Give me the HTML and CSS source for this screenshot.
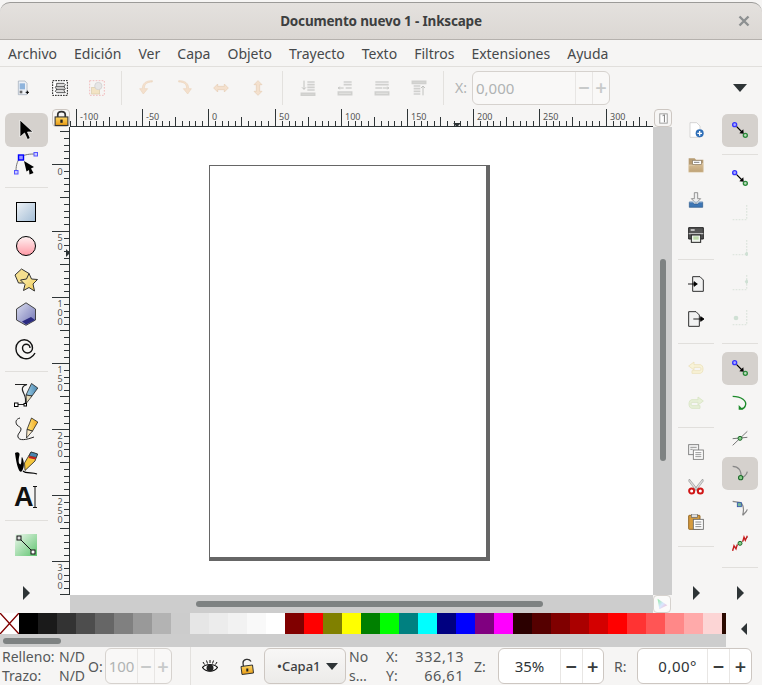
FILE: index.html
```html
<!DOCTYPE html>
<html lang="es">
<head>
    <meta charset="UTF-8">
    <title>Documento nuevo 1 - Inkscape</title>
    <link rel="stylesheet" href="styles.css">
</head>
<body>
<svg class="sprite" width="0" height="0">
    <defs>
        <linearGradient id="gRect" x1="0" y1="0" x2="1" y2="1"><stop offset="0" stop-color="#eef2f6"/><stop offset="1" stop-color="#a3bdd6"/></linearGradient>
        <linearGradient id="gCircle" x1="0" y1="0" x2="0" y2="1"><stop offset="0" stop-color="#fff2f2"/><stop offset="1" stop-color="#ff9aa6"/></linearGradient>
        <linearGradient id="gStar" x1="0" y1="0" x2="1" y2="1"><stop offset="0" stop-color="#fdf3bd"/><stop offset="1" stop-color="#efc94f"/></linearGradient>
        <linearGradient id="gBox" x1="0" y1="0" x2="1" y2="1"><stop offset="0" stop-color="#dcdff0"/><stop offset="1" stop-color="#6f72b4"/></linearGradient>
        <linearGradient id="gNode" x1="0" y1="0" x2="1" y2="1"><stop offset="0" stop-color="#eef7ee"/><stop offset="1" stop-color="#5fc46f"/></linearGradient>
        <linearGradient id="gNib" x1="0" y1="0" x2="1" y2="0"><stop offset="0" stop-color="#9fd0e8"/><stop offset="1" stop-color="#4a86b0"/></linearGradient>
        <linearGradient id="gPencil" x1="0" y1="0" x2="1" y2="0"><stop offset="0" stop-color="#ffe680"/><stop offset="1" stop-color="#f2a71b"/></linearGradient>
        <linearGradient id="gFolder" x1="0" y1="0" x2="0" y2="1"><stop offset="0" stop-color="#d6bd95"/><stop offset="1" stop-color="#bfa275"/></linearGradient>
        <linearGradient id="gLock" x1="0" y1="0" x2="0" y2="1"><stop offset="0" stop-color="#fdd663"/><stop offset="1" stop-color="#e89a12"/></linearGradient>
        <linearGradient id="gWheel" x1="0" y1="0" x2="1" y2="1"><stop offset="0" stop-color="#8fe8a0"/><stop offset=".5" stop-color="#d8e8ff"/><stop offset="1" stop-color="#f8b0c8"/></linearGradient>

        <symbol id="i-select" viewBox="0 0 24 24"><path d="M6 2V19L10.500 15 13.500 21.500 16.200 20.300 13.500 14H19Z" fill="#000" stroke="#fff" stroke-width=".7"/></symbol>
        <symbol id="i-node" viewBox="0 0 24 24">
            <path d="M2 19C2 12 4 8 6.500 5.500 9 3 14 2 20 2" fill="none" stroke="#777" stroke-width="1"/>
            <rect x="4.500" y="3" width="5" height="5" fill="#99f" stroke="#00f" stroke-width="1.400"/>
            <rect x="20" y=".5" width="3.500" height="3.500" fill="#ccf" stroke="#55f"/>
            <rect x=".5" y="18.500" width="3.500" height="3.500" fill="#ccf" stroke="#55f"/>
            <path d="M10 9 20 15 17 16.500 19.500 21 15.500 22.500 15 18 12.500 19.500Z" fill="#000"/>
        </symbol>
        <symbol id="i-rect" viewBox="0 0 24 24"><rect x="2.500" y="2.500" width="19" height="19" fill="url(#gRect)" stroke="#000" stroke-width="1"/></symbol>
        <symbol id="i-circle" viewBox="0 0 24 24"><circle cx="12" cy="12" r="9.500" fill="url(#gCircle)" stroke="#000" stroke-width="1"/></symbol>
        <symbol id="i-star" viewBox="0 0 24 24">
            <path d="M7.500 1 15 5.500 13 15H4.500L1 7Z" fill="#f5df8e" stroke="#333" stroke-width="1"/>
            <path d="M15 5.500 17.500 11 23.500 11.500 19 16 20.500 23 15 19.500 9.500 22.500 11 16.500 6.500 12 12.500 11Z" fill="url(#gStar)" stroke="#333" stroke-width="1"/>
        </symbol>
        <symbol id="i-box" viewBox="0 0 24 24">
            <path d="M12 .8 21.500 7V18L12 23.300 2.500 18V7Z" fill="url(#gBox)" stroke="#444" stroke-width="1"/>
            <path d="M21 18 12 22.500 8 19.500 17 15Z" fill="#2b2b80"/>
        </symbol>
        <symbol id="i-spiral" viewBox="0 0 24 24"><path d="M16 12A3.750 3.750 0 0 0 8.500 12 5 5 0 0 0 18.500 12 8.250 8.250 0 0 0 2 12 10 10 0 0 0 21 17" fill="none" stroke="#111" stroke-width="1.400"/></symbol>
        <symbol id="i-pen" viewBox="0 0 24 24">
            <path d="M1 1.500H13C8 3 7 6 10 11 12 15 12 18 11 21.500H3" fill="none" stroke="#222" stroke-width="1.100"/>
            <rect x=".5" y="20" width="3.500" height="3.500" fill="#fff" stroke="#000"/>
            <rect x="10" y="20.500" width="2.500" height="2.500" fill="#fff" stroke="#000"/>
            <path d="M17.500 .5 23.800 5 18 13 12 12Z" fill="url(#gNib)" stroke="#222" stroke-width=".8"/>
            <path d="M12 12 18 13 12.500 20Z" fill="#e8dcb8" stroke="#222" stroke-width=".8"/>
        </symbol>
        <symbol id="i-pencil" viewBox="0 0 24 24">
            <path d="M6 1C2 2 1 5 3 8 5 10 7 10 7 12 7 15 3 17 4 20 5 24 12 23 20 20" fill="none" stroke="#222" stroke-width="1"/>
            <path d="M17.500 1 23.800 5 18.500 14 13 12.500Z" fill="url(#gPencil)" stroke="#222" stroke-width=".8"/>
            <path d="M13 12.500 18.500 14 12.500 21Z" fill="#f8e8c8" stroke="#222" stroke-width=".8"/>
        </symbol>
        <symbol id="i-calli" viewBox="0 0 24 24">
            <path d="M1 2C3 .5 6 1 5.500 4 4.500 8 4 13 6.500 13.500 8 12 7 7 8 6 10 9 11 16 8 20 6 23 3 18 1 2Z" fill="#000"/>
            <path d="M9 20C12 23 18 21 23 23" fill="none" stroke="#000" stroke-width="1.200"/>
            <path d="M17 1 23.500 3 21 10 11 19.500 10.500 12Z" fill="#f5c63c" stroke="#222" stroke-width=".8"/>
            <path d="M17 1 23.500 3 22.300 6.500 15 5Z" fill="#4a86b0" stroke="#222" stroke-width=".6"/>
            <path d="M15.500 5 22.300 6.500 21.500 8.500 14.500 7Z" fill="#c02020"/>
        </symbol>
        <symbol id="i-gradient" viewBox="0 0 24 24">
            <rect x="1" y="1" width="22" height="22" fill="url(#gNode)"/>
            <path d="M5 5 19 19" stroke="#111" stroke-width="1"/>
            <rect x="3" y="3" width="4" height="4" fill="#ddd" stroke="#111"/>
            <rect x="17" y="17" width="4" height="4" fill="#fff" stroke="#111"/>
        </symbol>

        <symbol id="c-doc" viewBox="0 0 24 24">
            <path d="M5 1.500H15L18 5V22H5Z" fill="#eef1f6" stroke="#9aa6b4"/>
            <rect x="7" y="5" width="8" height="9" fill="#8fb4dc"/>
            <rect x="7" y="16" width="4" height="4" fill="#666"/>
            <path d="M16 18.500h5M18.500 16v5" stroke="#000" stroke-width="1.500"/>
        </symbol>
        <symbol id="c-layers" viewBox="0 0 24 24">
            <rect x="1" y="1" width="22" height="22" fill="#fff" stroke="#000" stroke-width="1.400" stroke-dasharray="2.500 1.500"/>
            <path d="M7 5H18L20 7 18 10 20 13 18 16 20 19H7L5 17 7 14 5 11 7 8Z" fill="#ddd" stroke="#333" stroke-width="1.200"/>
            <path d="M6 10H19M6 14H19" stroke="#333" stroke-width="1.200"/>
        </symbol>
        <symbol id="c-deselect" viewBox="0 0 24 24">
            <rect x="1" y="1" width="22" height="22" fill="none" stroke="#f1b9b9" stroke-width="1.400" stroke-dasharray="2.500 2"/>
            <rect x="4" y="11" width="12" height="10" fill="#f3e4c4" stroke="#d9c9a8"/>
            <circle cx="14" cy="9" r="5.500" fill="#e6e6e6" stroke="#ccc"/>
        </symbol>
        <symbol id="c-rotl" viewBox="0 0 24 24"><path d="M20 3C12 3 8 6 8 13H13L6.500 21 1 13H5C5 5 10 1 20 1Z" fill="#f4e0cd" stroke="#ecd4bd"/></symbol>
        <symbol id="c-rotr" viewBox="0 0 24 24"><path d="M4 3C12 3 16 6 16 13H11L17.500 21 23 13H19C19 5 14 1 4 1Z" fill="#f4e0cd" stroke="#ecd4bd"/></symbol>
        <symbol id="c-fliph" viewBox="0 0 24 24"><path d="M1 12 7 6V9.500H17V6L23 12 17 18V14.500H7V18Z" fill="#f4e0cd" stroke="#e6cdb4"/></symbol>
        <symbol id="c-flipv" viewBox="0 0 24 24"><path d="M12 1 18 7H14.500V17H18L12 23 6 17H9.500V7H6Z" fill="#f4e0cd" stroke="#e6cdb4"/></symbol>
        <symbol id="c-a1" viewBox="0 0 24 24"><path d="M2 20H22V23H2ZM11 3H22M11 7H22M11 11H22M11 15H22" fill="#e4e4e2" stroke="#d0d0ce" stroke-width="2.400"/><path d="M6 1V14M3 11 6 14 9 11" fill="none" stroke="#bdbdbb" stroke-width="1.400"/></symbol>
        <symbol id="c-a2" viewBox="0 0 24 24"><path d="M2 18H22V22H2ZM10 3H22M10 7H22M13 12H22" fill="#e4e4e2" stroke="#d0d0ce" stroke-width="2.400"/><path d="M2 12H10M4 10 2 12 4 14" fill="none" stroke="#bdbdbb" stroke-width="1.400"/></symbol>
        <symbol id="c-a3" viewBox="0 0 24 24"><path d="M2 18H22V22H2ZM2 3H22M2 7H22M2 12H12" fill="#e4e4e2" stroke="#d0d0ce" stroke-width="2.400"/><path d="M13 12H22M20 10 22 12 20 14" fill="none" stroke="#bdbdbb" stroke-width="1.400"/></symbol>
        <symbol id="c-a4" viewBox="0 0 24 24"><path d="M2 2H22V5H2ZM4 9H14M4 13H14M4 17H14M4 21H14" fill="#e4e4e2" stroke="#d0d0ce" stroke-width="2.400"/><path d="M18 23V9M15 12 18 9 21 12" fill="none" stroke="#bdbdbb" stroke-width="1.400"/></symbol>
        <symbol id="i-caret-d" viewBox="0 0 14 8"><path d="M0 0H14L7 8Z"/></symbol>

        <symbol id="r-new" viewBox="0 0 24 24">
            <path d="M3 1H13L18 6V23H3Z" fill="#fff" stroke="#c4c4c4"/>
            <circle cx="17.500" cy="17" r="6" fill="#2f6fb8"/>
            <path d="M17.500 13.500V20.500M14 17H21" stroke="#fff" stroke-width="2"/>
        </symbol>
        <symbol id="r-open" viewBox="0 0 24 24">
            <path d="M1 2H10L12 4H23V22H1Z" fill="#b79c73"/>
            <path d="M1 12H10L11 10H23V23H1Z" fill="url(#gFolder)" stroke="#f0e2cc" stroke-width=".8"/>
            <rect x="7" y="5" width="13" height="6" fill="#fff" stroke="#8a7a60" stroke-width="1"/>
            <path d="M9 8H17" stroke="#777" stroke-width="1.400"/>
        </symbol>
        <symbol id="r-save" viewBox="0 0 24 24">
            <path d="M9.500 1H14.500V10H19L12 17 5 10H9.500Z" fill="#eee" stroke="#888" stroke-width="1.300"/>
            <path d="M2 15H7L9 18H15L17 15H22V23H2Z" fill="#3e76b4" stroke="#2a5688"/>
            <path d="M2 15H22" stroke="#a8c4e0" stroke-width="1.400"/>
        </symbol>
        <symbol id="r-print" viewBox="0 0 24 24">
            <path d="M1 1H23V18H1Z" fill="#555" stroke="#222" stroke-width="1.500"/>
            <rect x="4" y="3" width="6" height="3" fill="#bbb"/>
            <path d="M1 10H23" stroke="#ccc" stroke-width="1.600"/>
            <rect x="5" y="12" width="14" height="11" fill="#f0f4ee" stroke="#222" stroke-width="1.500"/>
            <rect x="8" y="14" width="8" height="5" fill="#bcd8a8"/>
        </symbol>
        <symbol id="r-import" viewBox="0 0 24 24">
            <path d="M7 1H18L23 6V23H7Z" fill="#f2f2f2" stroke="#111" stroke-width="1.300"/>
            <path d="M0 12H12M9 8.500 14 12 9 15.500Z" fill="#000" stroke="#000" stroke-width="1.300"/>
        </symbol>
        <symbol id="r-export" viewBox="0 0 24 24">
            <path d="M1 1H12L17 6V23H1Z" fill="#f2f2f2" stroke="#111" stroke-width="1.300"/>
            <path d="M8 12H20M19 8.500 24 12 19 15.500Z" fill="#000" stroke="#000" stroke-width="1.300"/>
        </symbol>
        <symbol id="r-undo" viewBox="0 0 24 24"><path d="M9 3 1 9 9 15V11H18C20 11 20 16 18 16H6V20H18C24 20 24 7 18 7H9Z" fill="#f8f3d8" stroke="#ece2bc" stroke-width="1.300"/></symbol>
        <symbol id="r-redo" viewBox="0 0 24 24"><path d="M15 3 23 9 15 15V11H6C4 11 4 16 6 16H18V20H6C0 20 0 7 6 7H15Z" fill="#e8f0d8" stroke="#d8e4c4" stroke-width="1.300"/></symbol>
        <symbol id="r-copy" viewBox="0 0 24 24">
            <rect x="1" y="1" width="15" height="15" fill="#f4f4f4" stroke="#777" stroke-width="1.300"/>
            <rect x="8" y="9" width="15" height="14" fill="#fff" stroke="#777" stroke-width="1.300"/>
            <path d="M3.500 5H13M3.500 8H7M11 13H20M11 16H20M11 19H20" stroke="#888" stroke-width="1.300"/>
        </symbol>
        <symbol id="r-cut" viewBox="0 0 24 24">
            <path d="M2 0 14 15 11.500 17 1 3ZM22 0 10 15 12.500 17 23 3Z" fill="#ddd" stroke="#888" stroke-width=".9"/>
            <circle cx="5.500" cy="18" r="3.800" fill="#fff" stroke="#d01616" stroke-width="3"/>
            <circle cx="18.500" cy="18" r="3.800" fill="#fff" stroke="#d01616" stroke-width="3"/>
        </symbol>
        <symbol id="r-paste" viewBox="0 0 24 24">
            <rect x="1" y="2" width="17" height="21" rx="1" fill="#d69b3e" stroke="#8a5a14" stroke-width="1.300"/>
            <rect x="5" y="0" width="9" height="5" fill="#ddd" stroke="#666"/>
            <rect x="8" y="8" width="15" height="15" fill="#fff" stroke="#666" stroke-width="1.300"/>
            <path d="M11 12H20M11 15.500H20M11 19H20" stroke="#777" stroke-width="1.300"/>
        </symbol>

        <symbol id="s-snap" viewBox="0 0 24 24">
            <circle cx="4" cy="4" r="3" fill="#aaf" stroke="#33f" stroke-width="2"/>
            <circle cx="20" cy="20" r="3" fill="#bdb" stroke="#2a8a3a" stroke-width="2"/>
            <path d="M7 7 15 15" stroke="#000" stroke-width="1.800"/>
            <path d="M11 17 17.500 17.500 17 11Z" fill="#000"/>
        </symbol>
        <symbol id="s-bbox" viewBox="0 0 24 24"><path d="M22 0V22H0" fill="none" stroke="#dfe6df" stroke-width="2" stroke-dasharray="2.500 2"/></symbol>
        <symbol id="s-bbox2" viewBox="0 0 24 24"><path d="M22 0V22H0" fill="none" stroke="#dfe6df" stroke-width="2" stroke-dasharray="2.500 2"/><path d="M22 17 25 21 22 25 19 21Z" fill="#cfe0d4"/></symbol>
        <symbol id="s-bbox3" viewBox="0 0 24 24"><path d="M22 0V22H0" fill="none" stroke="#dfe6df" stroke-width="2" stroke-dasharray="2.500 2"/><path d="M22 6 25 10 22 14 19 10Z" fill="#cfe0d4"/></symbol>
        <symbol id="s-bbox4" viewBox="0 0 24 24"><path d="M22 0V22H0" fill="none" stroke="#dfe6df" stroke-width="2" stroke-dasharray="2.500 2"/><circle cx="6" cy="12" r="3.500" fill="#cfe0d4"/></symbol>
        <symbol id="s-path" viewBox="0 0 24 24"><path d="M1 2C14 2 23 9 20 16 19 19 16 21 12 20" fill="none" stroke="#1c8a2a" stroke-width="2"/><path d="M10 15V22H17Z" fill="#1c8a2a"/></symbol>
        <symbol id="s-cross" viewBox="0 0 24 24"><path d="M1 23 23 2M1 13 23 11" fill="none" stroke="#777" stroke-width="1.500"/><circle cx="12" cy="12.500" r="3" fill="#8c8" stroke="#1c6a2a" stroke-width="1.500"/></symbol>
        <symbol id="s-node" viewBox="0 0 24 24"><path d="M1 2C10 2 14 7 14 19M14 19C17 19 22 15 23 10" fill="none" stroke="#888" stroke-width="1.800"/><circle cx="13" cy="19" r="3.200" fill="#8c8" stroke="#1c6a2a" stroke-width="1.600"/></symbol>
        <symbol id="s-smooth" viewBox="0 0 24 24"><path d="M1 2 13 4C18 8 18 15 16 23M16 23C18 21 22 18 23 14" fill="none" stroke="#888" stroke-width="1.800"/><rect x="8" y="4" width="6" height="6" fill="#7b9" stroke="#35a" stroke-width="1.300"/></symbol>
        <symbol id="s-mid" viewBox="0 0 24 24">
            <path d="M0 22 24 3" stroke="#888" stroke-width="1.200"/>
            <path d="M1 24 3 16 6 21 8 14M16 10 18 3 20 8 23 1" fill="none" stroke="#c81818" stroke-width="1.900"/>
            <circle cx="12" cy="12.500" r="3" fill="#8c8" stroke="#1c6a2a" stroke-width="1.500"/>
        </symbol>
    </defs>
</svg>

<div class="window">
    <header class="titlebar">
        <span class="title">Documento nuevo 1 - Inkscape</span>
        <svg class="close" viewBox="0 0 12 12"><path d="M1.500 1.500 10.500 10.500M10.500 1.500 1.500 10.500"/></svg>
    </header>
    <nav class="menubar">
        <span>Archivo</span><span>Edición</span><span>Ver</span><span>Capa</span><span>Objeto</span><span>Trayecto</span><span>Texto</span><span>Filtros</span><span>Extensiones</span><span>Ayuda</span>
    </nav>
    <div class="commandbar">
        <span class="cmd"><svg class="icon"><use href="#c-doc"/></svg></span>
        <span class="cmd"><svg class="icon"><use href="#c-layers"/></svg></span>
        <span class="cmd"><svg class="icon"><use href="#c-deselect"/></svg></span>
        <i class="vsep"></i>
        <span class="cmd"><svg class="icon"><use href="#c-rotl"/></svg></span>
        <span class="cmd"><svg class="icon"><use href="#c-rotr"/></svg></span>
        <span class="cmd"><svg class="icon"><use href="#c-fliph"/></svg></span>
        <span class="cmd"><svg class="icon"><use href="#c-flipv"/></svg></span>
        <i class="vsep"></i>
        <span class="cmd"><svg class="icon"><use href="#c-a1"/></svg></span>
        <span class="cmd"><svg class="icon"><use href="#c-a2"/></svg></span>
        <span class="cmd"><svg class="icon"><use href="#c-a3"/></svg></span>
        <span class="cmd"><svg class="icon"><use href="#c-a4"/></svg></span>
        <i class="vsep"></i>
        <span class="cmd-label">X:</span>
        <div class="spin spin-x disabled"><span class="spin-val left">0,000</span><b>−</b><b>+</b></div>
        <svg class="more"><use href="#i-caret-d"/></svg>
    </div>

    <main class="workspace">
        <aside class="toolbox">
            <span class="tool active"><svg class="icon"><use href="#i-select"/></svg></span>
            <span class="tool"><svg class="icon"><use href="#i-node"/></svg></span>
            <i class="sep"></i>
            <span class="tool"><svg class="icon"><use href="#i-rect"/></svg></span>
            <span class="tool"><svg class="icon"><use href="#i-circle"/></svg></span>
            <span class="tool"><svg class="icon"><use href="#i-star"/></svg></span>
            <span class="tool"><svg class="icon"><use href="#i-box"/></svg></span>
            <span class="tool"><svg class="icon"><use href="#i-spiral"/></svg></span>
            <i class="sep"></i>
            <span class="tool"><svg class="icon"><use href="#i-pen"/></svg></span>
            <span class="tool"><svg class="icon"><use href="#i-pencil"/></svg></span>
            <span class="tool"><svg class="icon"><use href="#i-calli"/></svg></span>
            <span class="tool"><svg class="icon text-icon" viewBox="0 0 24 24"><text x="0" y="21" class="glyph-a">A</text><path d="M19 1.500H23M21 1.500V22.500M19 22.500H23" fill="none" stroke="#111"/></svg></span>
            <i class="sep"></i>
            <span class="tool"><svg class="icon"><use href="#i-gradient"/></svg></span>
            <span class="overflow"></span>
        </aside>

        <div class="canvas-area">
            <div class="ruler-row">
                <span class="corner-btn"><svg viewBox="0 0 14 15" class="lock"><path d="M3.500 7V4.500C3.500 .5 10.500 .5 10.500 4.500V7" fill="none" stroke="#333" stroke-width="1.600"/><rect x="1" y="6.500" width="12" height="8" fill="url(#gLock)" stroke="#333"/><path d="M7 9v3" stroke="#222" stroke-width="2.200"/></svg></span>
                <svg class="hruler" viewBox="0 0 583 19">
                    <defs>
                        <g id="htick"><path d="M.5 1V18M7.500 13V18M14.500 13V18M20.500 13V18M27.500 13V18M33.500 9V18M40.500 13V18M47.500 13V18M53.500 13V18M60.500 13V18"/></g>
                    </defs>
                    <path class="axis" d="M0 18.500H583"/>
                    <use class="ticks" href="#htick" x="-60"/><use class="ticks" href="#htick" x="6"/><use class="ticks" href="#htick" x="72"/><use class="ticks" href="#htick" x="138"/><use class="ticks" href="#htick" x="205"/><use class="ticks" href="#htick" x="271"/><use class="ticks" href="#htick" x="337"/><use class="ticks" href="#htick" x="403"/><use class="ticks" href="#htick" x="469"/><use class="ticks" href="#htick" x="536"/>
                    <text x="10" y="12">-100</text><text x="76" y="12">-50</text><text x="142" y="12">0</text><text x="209" y="12">50</text><text x="275" y="12">100</text><text x="341" y="12">150</text><text x="407" y="12">200</text><text x="473" y="12">250</text><text x="540" y="12">300</text>
                    <path class="mark" d="M383 15H391L387 19Z"/>
                </svg>
                <span class="corner-btn side"><svg viewBox="0 0 14 14" class="guide"><rect x="3" y="2" width="8" height="10" fill="#fff" stroke="#999"/><path d="M6 4 8 3V11" fill="none" stroke="#777"/></svg></span>
            </div>
            <div class="canvas-row">
                <svg class="vruler" viewBox="0 0 18 468">
                    <defs>
                        <g id="vtick"><path d="M0 .5H18M12 7.500H18M12 14.500H18M12 20.500H18M12 27.500H18M8 33.500H18M12 40.500H18M12 47.500H18M12 53.500H18M12 60.500H18"/></g>
                    </defs>
                    <path class="axis" d="M17.500 0V468"/>
                    <use class="ticks" href="#vtick" y="-29"/><use class="ticks" href="#vtick" y="37"/><use class="ticks" href="#vtick" y="104"/><use class="ticks" href="#vtick" y="170"/><use class="ticks" href="#vtick" y="236"/><use class="ticks" href="#vtick" y="302"/><use class="ticks" href="#vtick" y="368"/><use class="ticks" href="#vtick" y="434"/>
                    <text x="8" y="48">0</text>
                    <text x="8" y="114">5<tspan x="8" dy="9">0</tspan></text>
                    <text x="8" y="180">1<tspan x="8" dy="9">0</tspan><tspan x="8" dy="9">0</tspan></text>
                    <text x="8" y="246">1<tspan x="8" dy="9">5</tspan><tspan x="8" dy="9">0</tspan></text>
                    <text x="8" y="312">2<tspan x="8" dy="9">0</tspan><tspan x="8" dy="9">0</tspan></text>
                    <text x="8" y="378">2<tspan x="8" dy="9">5</tspan><tspan x="8" dy="9">0</tspan></text>
                    <text x="8" y="444">3<tspan x="8" dy="9">0</tspan><tspan x="8" dy="9">0</tspan></text>
                    <path class="mark" d="M14 122V130L18 126Z"/>
                </svg>
                <div class="canvas"><div class="page"></div></div>
                <div class="vscroll"><i></i></div>
            </div>
            <div class="hscroll-row">
                <div class="hscroll"><i></i></div>
                <span class="wheel"><svg viewBox="0 0 18 18"><path d="M4 3 15 10.500 6 15Z" fill="url(#gWheel)"/></svg></span>
            </div>
        </div>

        <aside class="rightbars">
            <div class="rcol">
                <span class="tool"><svg class="icon"><use href="#r-new"/></svg></span>
                <span class="tool"><svg class="icon"><use href="#r-open"/></svg></span>
                <span class="tool"><svg class="icon"><use href="#r-save"/></svg></span>
                <span class="tool"><svg class="icon"><use href="#r-print"/></svg></span>
                <i class="sep"></i>
                <span class="tool"><svg class="icon"><use href="#r-import"/></svg></span>
                <span class="tool"><svg class="icon"><use href="#r-export"/></svg></span>
                <i class="sep"></i>
                <span class="tool"><svg class="icon"><use href="#r-undo"/></svg></span>
                <span class="tool"><svg class="icon"><use href="#r-redo"/></svg></span>
                <i class="sep"></i>
                <span class="tool"><svg class="icon"><use href="#r-copy"/></svg></span>
                <span class="tool"><svg class="icon"><use href="#r-cut"/></svg></span>
                <span class="tool"><svg class="icon"><use href="#r-paste"/></svg></span>
                <i class="sep"></i>
                <span class="overflow"></span>
            </div>
            <div class="rcol">
                <span class="tool active"><svg class="icon"><use href="#s-snap"/></svg></span>
                <i class="sep short"></i>
                <span class="tool"><svg class="icon"><use href="#s-snap"/></svg></span>
                <span class="tool"><svg class="icon"><use href="#s-bbox"/></svg></span>
                <span class="tool"><svg class="icon"><use href="#s-bbox2"/></svg></span>
                <span class="tool"><svg class="icon"><use href="#s-bbox3"/></svg></span>
                <span class="tool"><svg class="icon"><use href="#s-bbox4"/></svg></span>
                <i class="sep tall"></i>
                <span class="tool active"><svg class="icon"><use href="#s-snap"/></svg></span>
                <span class="tool"><svg class="icon"><use href="#s-path"/></svg></span>
                <span class="tool"><svg class="icon"><use href="#s-cross"/></svg></span>
                <span class="tool active"><svg class="icon"><use href="#s-node"/></svg></span>
                <span class="tool"><svg class="icon"><use href="#s-smooth"/></svg></span>
                <span class="tool"><svg class="icon"><use href="#s-mid"/></svg></span>
                <i class="sep"></i>
                <span class="overflow"></span>
            </div>
        </aside>
    </main>

    <div class="palette-row">
        <div class="palette-col">
            <div class="palette">
                <span class="swatch none"><svg viewBox="0 0 19 21"><path d="M0 0 19 21M19 0 0 21"/></svg></span>
                <span class="swatch c000"></span><span class="swatch c1a"></span><span class="swatch c33"></span><span class="swatch c4d"></span><span class="swatch c66"></span><span class="swatch c80"></span><span class="swatch c99"></span><span class="swatch cb3"></span><span class="swatch ccc"></span><span class="swatch ce6"></span><span class="swatch cec"></span><span class="swatch cf2"></span><span class="swatch cf9"></span><span class="swatch cff"></span>
                <span class="swatch maroon"></span><span class="swatch red"></span><span class="swatch olive"></span><span class="swatch yellow"></span><span class="swatch green"></span><span class="swatch lime"></span><span class="swatch teal"></span><span class="swatch cyan"></span><span class="swatch navy"></span><span class="swatch blue"></span><span class="swatch purple"></span><span class="swatch magenta"></span>
                <span class="swatch r1"></span><span class="swatch r2"></span><span class="swatch r3"></span><span class="swatch r4"></span><span class="swatch r5"></span><span class="swatch r6"></span><span class="swatch r7"></span><span class="swatch r8"></span><span class="swatch r9"></span><span class="swatch r10"></span><span class="swatch r11"></span><span class="swatch r12"></span>
            </div>
            <div class="palette-scroll"><i></i></div>
        </div>
        <div class="palette-side"><span class="caret-left"></span></div>
    </div>

    <footer class="statusbar">
        <div class="fillstroke">
            <div><span>Relleno:</span><span>N/D</span></div>
            <div><span>Trazo:</span><span>N/D</span></div>
        </div>
        <span class="lbl lbl-o">O:</span>
        <div class="spin spin-o disabled"><span class="spin-val">100</span><b>−</b><b>+</b></div>
        <i class="vsep status-sep"></i>
        <svg class="eye" viewBox="0 0 16 13"><path d="M.5 7.500C4 3.500 12 3.500 15.500 7.500 12 12.500 4 12.500 .5 7.500Z" fill="#fff" stroke="#111" stroke-width="1.200"/><circle cx="8" cy="8" r="3.500" fill="#222"/><path d="M2.500 4.500 1 2M5.500 3.500 4.500 .5M8 3V0M10.500 3.500 11.500 .5M13.500 4.500 15 2" stroke="#111"/></svg>
        <svg class="padlock" viewBox="0 0 14 17"><path d="M3.500 9 3 5C3 1 9 0 11 3.500" fill="none" stroke="#333" stroke-width="1.300"/><path d="M1 8.500 12.500 7 13.500 15 2 16.500Z" fill="url(#gLock)" stroke="#333"/><path d="M7.300 10.500v3" stroke="#222" stroke-width="2"/></svg>
        <div class="layer-btn"><span>•Capa1</span><svg class="layer-caret"><use href="#i-caret-d"/></svg></div>
        <div class="nosel">No<br>s…</div>
        <div class="coords">
            <div><span>X:</span><span>332,13</span></div>
            <div><span>Y:</span><span>66,61</span></div>
        </div>
        <span class="lbl lbl-z">Z:</span>
        <div class="spin spin-z"><span class="spin-val center">35%</span><b>−</b><b>+</b></div>
        <span class="lbl lbl-r">R:</span>
        <div class="spin spin-r"><span class="spin-val right">0,00°</span><b>−</b><b>+</b></div>
    </footer>
</div>
</body>
</html>
```

FILE: styles.css
```css
* {
    box-sizing: border-box;
}
html, body {
    margin: 0;
    padding: 0;
    background: #fff;
}
.sprite {
    position: absolute;
}
.window {
    width: 762px;
    height: 685px;
    display: flex;
    flex-direction: column;
    overflow: hidden;
    font-family: "Noto Sans", sans-serif;
    color: #2e3436;
    background: #f6f5f4;
}

/* title + menu */
.titlebar {
    height: 38px;
    margin-top: 2px;
    flex: none;
    display: flex;
    align-items: center;
    justify-content: center;
    background: linear-gradient(#e4e1de, #dbd7d3);
    border-top: 1px solid #9b9a98;
    border-bottom: 1px solid #b5b1ad;
    border-radius: 10px 10px 0 0;
}
.title {
    font-size: 13.5px;
    font-weight: 700;
    letter-spacing: -.18px;
    color: #3d3f40;
}
.close {
    position: absolute;
    left: 738px;
    top: 15px;
    width: 12px;
    height: 12px;
}
.close path {
    stroke: #8d9091;
    stroke-width: 2.4;
    fill: none;
}
.menubar {
    height: 27px;
    flex: none;
    display: flex;
    align-items: center;
    gap: 17px;
    padding-left: 8px;
    font-size: 14px;
    color: #46494b;
    border-bottom: 1px solid #e1dfdc;
}

/* top command bar */
.commandbar {
    height: 41px;
    flex: none;
    display: flex;
    align-items: center;
    padding-left: 4px;
}
.cmd {
    width: 37px;
    display: flex;
    justify-content: center;
}
.icon {
    width: 24px;
    height: 24px;
    display: block;
}
.cmd .icon {
    width: 16px;
    height: 16px;
}
.vsep {
    width: 1px;
    height: 34px;
    background: #e3e1de;
    margin: 0 6px;
}
.cmd-label {
    margin-left: 4px;
    width: 18px;
    padding-left: 1px;
    font-size: 14px;
    color: #b0b3b3;
}
.more {
    width: 14px;
    height: 8px;
    margin-left: 123px;
    fill: #2e3436;
}

/* spin buttons */
.spin {
    display: flex;
    align-items: stretch;
    background: #fff;
    border: 1px solid #cdc7c2;
    border-radius: 6px;
    font-size: 15px;
    overflow: hidden;
}
.spin b {
    display: flex;
    align-items: center;
    justify-content: center;
    font-weight: 600;
    font-size: 20px;
    border-left: 1px solid #e8e6e4;
    color: #3a3d3e;
    width: 21px;
}
.spin-val {
    flex: 1;
    display: flex;
    align-items: center;
    justify-content: center;
}
.spin-val.left {
    justify-content: flex-start;
    padding-left: 3px;
}
.spin-val.right {
    justify-content: flex-end;
    padding-right: 10px;
    letter-spacing: .5px;
}
.spin.disabled {
    background: #f9f8f7;
    color: #b0b3b3;
    border-color: #d6d2ce;
}
.spin.disabled b {
    color: #c8caca;
    width: 17px;
}
.spin-x {
    width: 138px;
    height: 34px;
}

/* middle part */
.workspace {
    height: 505px;
    flex: none;
    display: flex;
}
.toolbox {
    width: 52px;
    flex: none;
    display: flex;
    flex-direction: column;
    padding-top: 5px;
    align-items: center;
}
.tool {
    width: 100%;
    height: 34px;
    flex: none;
    display: flex;
    align-items: center;
    justify-content: center;
}
.toolbox .tool {
    width: 43px;
}
.tool.active {
    background: #d5d1cd;
    border-radius: 6px;
}
.sep {
    flex: none;
    height: 13.5px;
    width: 43px;
    display: flex;
    align-items: center;
}
.sep::before {
    content: "";
    width: 100%;
    height: 1px;
    background: #e1dfdc;
}
.overflow {
    margin-top: auto;
    margin-bottom: 13px;
    width: 0;
    height: 0;
    border-left: 7px solid #2e3436;
    border-top: 7px solid transparent;
    border-bottom: 7px solid transparent;
}
.text-icon {
    overflow: visible;
}
.glyph-a {
    font-family: "Liberation Sans", sans-serif;
    font-weight: 700;
    font-size: 27px;
    fill: #111;
}

.canvas-area {
    width: 620px;
    flex: none;
    display: flex;
    flex-direction: column;
}
.ruler-row {
    height: 19px;
    flex: none;
    display: flex;
}
.corner-btn {
    width: 18px;
    height: 18px;
    flex: none;
    margin-top: 1px;
    display: flex;
    align-items: center;
    justify-content: center;
    border: 1px solid #cdc7c2;
    border-radius: 4px;
    background: #f6f5f4;
}
.corner-btn.side {
    margin-left: 1px;
}
.lock {
    width: 15px;
    height: 16px;
}
.guide {
    width: 13px;
    height: 13px;
}
.hruler {
    width: 583px;
    height: 19px;
    flex: none;
}
.hruler text, .vruler text {
    font-family: "Noto Sans", sans-serif;
    font-size: 9px;
    fill: #555;
}
.vruler text {
    text-anchor: middle;
}
.ticks, .axis {
    stroke: #2e3436;
    stroke-width: 1;
    fill: none;
}
.mark {
    fill: #2e3436;
}
.canvas-row {
    height: 468px;
    flex: none;
    display: flex;
}
.vruler {
    width: 18px;
    height: 468px;
    flex: none;
}
.canvas {
    width: 583px;
    flex: none;
    background: #fff;
    padding: 38px 0 0 139px;
}
.page {
    width: 281px;
    height: 396px;
    background: #fff;
    border: 1px solid #666;
    border-right-width: 4px;
    border-bottom-width: 4px;
}
.vscroll {
    width: 19px;
    flex: none;
    background: #cdcdcd;
    display: flex;
    justify-content: center;
    padding-top: 132px;
}
.vscroll i {
    width: 6px;
    height: 202px;
    border-radius: 3px;
    background: #7e8282;
}
.hscroll-row {
    height: 18px;
    flex: none;
    display: flex;
    padding-left: 18px;
}
.hscroll {
    width: 583px;
    background: #cdcdcd;
    padding: 6px 0 0 126px;
}
.hscroll i {
    display: block;
    width: 347px;
    height: 6px;
    border-radius: 3px;
    background: #7e8282;
}
.wheel {
    width: 18px;
    background: #fbfbfa;
    border: 1px solid #d6d2ce;
    border-radius: 4px;
    display: flex;
}
.wheel svg {
    width: 100%;
    height: 100%;
}
.rightbars {
    flex: 1;
    display: flex;
    gap: 8px;
    padding: 4.5px 0 0 6px;
}
.rcol {
    width: 36px;
    flex: none;
    display: flex;
    flex-direction: column;
    align-items: center;
}
.rcol .tool {
    height: 35px;
}
.rcol .icon {
    width: 16px;
    height: 16px;
    overflow: visible;
}
.rcol .sep {
    width: 36px;
    height: 14px;
}
.rcol .sep.short {
    height: 13px;
}
.rcol .sep.tall {
    height: 15px;
}
.rcol .tool.active {
    background-clip: padding-box;
    border-top: .5px solid transparent;
    border-bottom: .5px solid transparent;
}
.rcol .overflow {
    margin-bottom: 13px;
}

/* palette */
.palette-row {
    height: 34px;
    flex: none;
    display: flex;
}
.palette-col {
    width: 726px;
    flex: none;
    overflow: hidden;
}
.palette {
    display: flex;
    height: 21px;
}
.swatch {
    width: 19px;
    flex: none;
    display: block;
}
.none {
    background: #fff;
}
.none svg {
    display: block;
}
.none path {
    stroke: #800000;
    stroke-width: 1.4;
    fill: none;
}
.c000 { background: #000; }
.c1a { background: #1a1a1a; }
.c33 { background: #333; }
.c4d { background: #4d4d4d; }
.c66 { background: #666; }
.c80 { background: #808080; }
.c99 { background: #999; }
.cb3 { background: #b3b3b3; }
.ccc { background: #ccc; }
.ce6 { background: #e6e6e6; }
.cec { background: #ececec; }
.cf2 { background: #f2f2f2; }
.cf9 { background: #f9f9f9; }
.cff { background: #fff; }
.maroon { background: #800000; }
.red { background: #f00; }
.olive { background: #808000; }
.yellow { background: #ff0; }
.green { background: #008000; }
.lime { background: #0f0; }
.teal { background: #008080; }
.cyan { background: #0ff; }
.navy { background: #000080; }
.blue { background: #00f; }
.purple { background: #800080; }
.magenta { background: #f0f; }
.r1 { background: #2b0000; }
.r2 { background: #500; }
.r3 { background: #800000; }
.r4 { background: #a00; }
.r5 { background: #d40000; }
.r6 { background: #f00; }
.r7 { background: #f33; }
.r8 { background: #f55; }
.r9 { background: #f88; }
.r10 { background: #faa; }
.r11 { background: #fcd5d5; }
.r12 { background: #2b0a00; }
.palette-scroll {
    height: 13px;
    background: #cdcdcd;
    padding: 4px 0 0 3px;
}
.palette-scroll i {
    display: block;
    width: 58px;
    height: 6px;
    border-radius: 3px;
    background: #7e8282;
}
.palette-side {
    flex: 1;
    display: flex;
    justify-content: center;
    padding: 10px 0 0 0;
}
.caret-left {
    width: 0;
    height: 0;
    border-right: 6px solid #2e3436;
    border-top: 6px solid transparent;
    border-bottom: 6px solid transparent;
}

/* status bar */
.statusbar {
    flex: 1;
    display: flex;
    align-items: center;
    font-size: 14px;
    color: #555859;
}
.fillstroke {
    width: 88px;
    padding-left: 2px;
    line-height: 19px;
    flex: none;
}
.fillstroke div {
    display: flex;
}
.fillstroke span:first-child {
    width: 57px;
}
.lbl {
    flex: none;
}
.lbl-o {
    width: 17px;
}
.spin-o {
    width: 67px;
    height: 36px;
}
.spin-o b {
    width: 16px;
}
.status-sep {
    height: 38px;
    margin: 0 0 0 18px;
}
.eye {
    width: 16px;
    height: 13px;
    margin-left: 11px;
    flex: none;
}
.padlock {
    width: 14px;
    height: 17px;
    margin-left: 22px;
    flex: none;
}
.layer-btn {
    width: 82px;
    height: 36px;
    margin-left: 10px;
    flex: none;
    display: flex;
    align-items: center;
    gap: 5px;
    padding-left: 12px;
    border: 1px solid #cdc7c2;
    border-radius: 6px;
    background: linear-gradient(#f8f7f6, #ecebe9);
    font-size: 13px;
    font-weight: 500;
    color: #3d4041;
}
.layer-caret {
    width: 12px;
    height: 7px;
    fill: #2e3436;
}
.nosel {
    width: 37px;
    margin-left: 3px;
    flex: none;
    line-height: 19px;
}
.coords {
    width: 78px;
    flex: none;
    line-height: 19px;
}
.coords div {
    display: flex;
    justify-content: space-between;
}
.coords span:last-child {
    font-size: 14.5px;
    letter-spacing: .55px;
}
.lbl-z {
    margin-left: 10px;
    width: 24px;
}
.spin-z {
    width: 106px;
    height: 36px;
    color: #2e3436;
}
.spin-z .spin-val {
    flex: none;
    width: 61px;
}
.spin-z b {
    width: 22px;
}
.lbl-r {
    margin-left: 10px;
    width: 23px;
}
.spin-r {
    width: 115px;
    height: 36px;
    color: #2e3436;
}
.spin-r .spin-val {
    flex: none;
    width: 69px;
}
.spin-r b {
    width: 22px;
}
```
